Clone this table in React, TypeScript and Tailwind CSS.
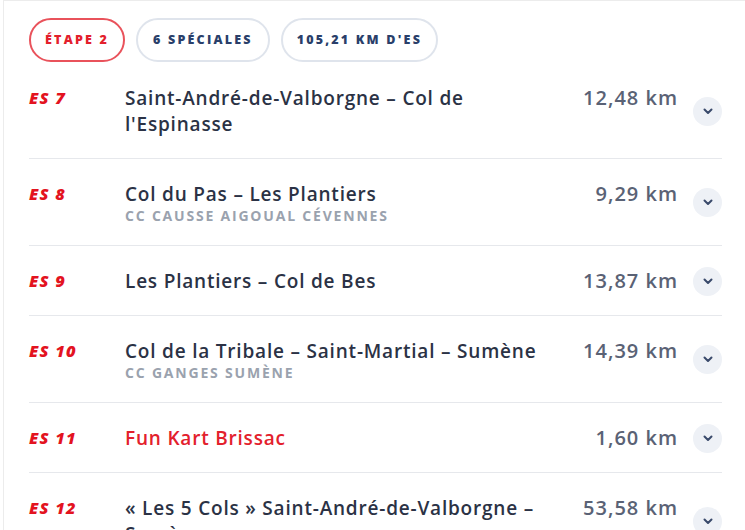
import React from "react";

type Row = { code: string; title: string; sub?: string; km: string; red?: boolean };

const rows: Row[] = [
  { code: "ES 7", title: "Saint-André-de-Valborgne – Col de l'Espinasse", km: "12,48 km" },
  { code: "ES 8", title: "Col du Pas – Les Plantiers", sub: "CC Causse Aigoual Cévennes", km: "9,29 km" },
  { code: "ES 9", title: "Les Plantiers – Col de Bes", km: "13,87 km" },
  { code: "ES 10", title: "Col de la Tribale – Saint-Martial – Sumène", sub: "CC Ganges Sumène", km: "14,39 km" },
  { code: "ES 11", title: "Fun Kart Brissac", km: "1,60 km", red: true },
  { code: "ES 12", title: "« Les 5 Cols » Saint-André-de-Valborgne – Sumène", km: "53,58 km" },
];

function Chevron() {
  return (
    <svg width="10" height="7" viewBox="0 0 10 7" fill="none">
      <path d="M1.5 1.5 L5 5 L8.5 1.5" stroke="#3a4a6b" strokeWidth="2" strokeLinecap="round" strokeLinejoin="round" />
    </svg>
  );
}

export default function App() {
  return (
    <div className="min-h-screen bg-white overflow-hidden" style={{ fontFamily: '"Open Sans", "Noto Sans", sans-serif' }}>
      <div className="ml-[3px] border-l border-t border-[#ececec] pl-[25px] pr-[23px] pt-[17px]">
        <div className="flex gap-[11px]">
          <span className="flex h-[44px] items-center rounded-full border-2 border-[#e9525b] px-[14px] text-[12.5px] font-extrabold uppercase tracking-[2.2px] text-[#e3202c]">
            Étape 2
          </span>
          <span className="flex h-[44px] items-center rounded-full border-2 border-[#dfe4ec] px-[15px] text-[12.5px] font-extrabold uppercase tracking-[2.2px] text-[#2a3f6a]">
            6 spéciales
          </span>
          <span className="flex h-[44px] items-center rounded-full border-2 border-[#dfe4ec] px-[14px] text-[12.5px] font-extrabold uppercase tracking-[2.2px] text-[#2a3f6a]">
            105,21 km d'es
          </span>
        </div>
        <div className="mt-[1px]">
          {rows.map((r, i) => (
            <div
              key={r.code}
              className={`flex items-center pt-[22px] pb-[21px] ${i < rows.length - 1 ? "border-b border-[#e6e8ec]" : ""}`}
            >
              <div className="flex flex-1 items-start">
                <div className="w-[96px] shrink-0 text-[16.5px] font-extrabold italic leading-[26px] tracking-[1.2px] text-[#e3131f]">
                  {r.code}
                </div>
                <div className="w-[432px] shrink-0">
                  <div className={`text-[19px] font-semibold leading-[26px] tracking-[0.8px] ${r.red ? "text-[#e3202c]" : "text-[#2b3245]"}`}>
                    {r.title}
                  </div>
                  {r.sub && (
                    <div className="mt-[1px] text-[14px] font-bold uppercase leading-[16px] tracking-[1.8px] text-[#9aa2ae]">
                      {r.sub}
                    </div>
                  )}
                </div>
                <div className="flex-1 text-right text-[20px] font-semibold leading-[26px] tracking-[1px] text-[#5a6275]">
                  {r.km}
                </div>
              </div>
              <div className="-my-[2px] ml-[15px] flex h-[29px] w-[29px] shrink-0 items-center justify-center rounded-full bg-[#eef1f6]">
                <Chevron />
              </div>
            </div>
          ))}
        </div>
      </div>
    </div>
  );
}
